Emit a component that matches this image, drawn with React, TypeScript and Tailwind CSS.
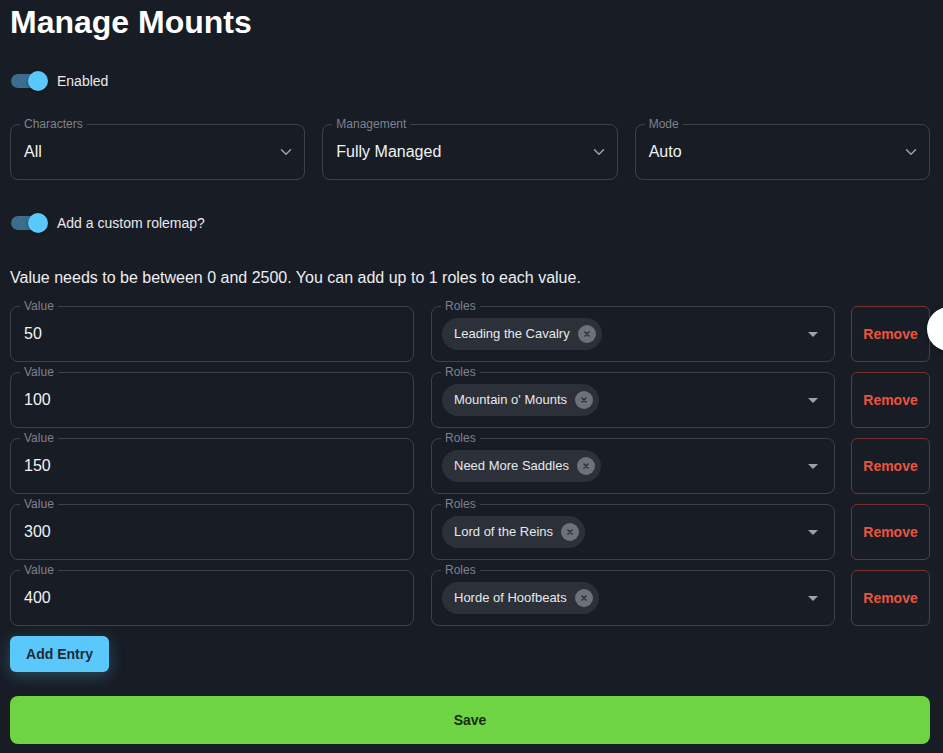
import { ChevronDown } from 'lucide-react';

type Entry = { value: string; role: string };

const entries: Entry[] = [
  { value: '50', role: 'Leading the Cavalry' },
  { value: '100', role: "Mountain o' Mounts" },
  { value: '150', role: 'Need More Saddles' },
  { value: '300', role: 'Lord of the Reins' },
  { value: '400', role: 'Horde of Hoofbeats' },
];

const Toggle = ({ label }: { label: string }) => (
  <div className="flex h-[24px] items-center">
    <div className="relative ml-[1px] h-[14px] w-[36px] rounded-full bg-[#3a6d8e]">
      <div className="absolute top-[-3px] left-[17px] h-[20px] w-[20px] rounded-full bg-[#5ac8fa] shadow-[0_1px_3px_rgba(0,0,0,0.4)]" />
    </div>
    <span className="ml-[10px] text-[14px] text-[#e8eaee]">{label}</span>
  </div>
);

const Outlined = ({ label, children, className }: { label: string; children: React.ReactNode; className?: string }) => (
  <div className={`relative flex h-[56px] items-center rounded-[8px] border border-[#3c414b] ${className ?? ''}`}>
    <span className="absolute top-[-8px] left-[9px] bg-[#181c24] px-[4px] text-[12px] leading-[14px] text-[#7d838d]">
      {label}
    </span>
    {children}
  </div>
);

const SelectField = ({ label, value }: { label: string; value: string }) => (
  <Outlined label={label} className="flex-1 pr-[9px] pl-[13px]">
    <span className="flex-1 text-[16px] text-[#f1f2f4]">{value}</span>
    <ChevronDown size={18} strokeWidth={2} className="text-[#9ba1aa]" />
  </Outlined>
);

const RoleChip = ({ role }: { role: string }) => (
  <div className="flex h-[32px] items-center rounded-full bg-[#2c3038] pr-[6px] pl-[12px]">
    <span className="text-[13px] text-[#e6e8eb]">{role}</span>
    <span className="ml-[8px] flex h-[18px] w-[18px] items-center justify-center rounded-full bg-[#6c717a]">
      <svg width="6" height="6" viewBox="0 0 6 6">
        <path d="M1 1L5 5M5 1L1 5" stroke="#2c3038" strokeWidth="1.6" strokeLinecap="round" />
      </svg>
    </span>
  </div>
);

const App = () => {
  return (
    <div
      className="relative min-h-screen w-full overflow-hidden bg-[#181c24] px-[10px] text-[#f1f2f4]"
      style={{ fontFamily: '"Liberation Sans", Arial, sans-serif' }}
    >
      <div className="w-[920px]">
        <h1 className="pt-[3px] text-[32px] leading-[38px] font-bold text-white">Manage Mounts</h1>
        <div className="mt-[28px]">
          <Toggle label="Enabled" />
        </div>
        <div className="mt-[31px] flex gap-[17px]">
          <SelectField label="Characters" value="All" />
          <SelectField label="Management" value="Fully Managed" />
          <SelectField label="Mode" value="Auto" />
        </div>
        <div className="mt-[31px]">
          <Toggle label="Add a custom rolemap?" />
        </div>
        <p className="mt-[33px] text-[16px] leading-[20px] text-[#eceef1]">
          Value needs to be between 0 and 2500. You can add up to 1 roles to each value.
        </p>
        <div className="mt-[18px] flex flex-col gap-[10px]">
          {entries.map((entry) => (
            <div key={entry.value} className="flex">
              <Outlined label="Value" className="w-[404px] shrink-0 pl-[13px]">
                <span className="text-[16px] text-[#f1f2f4]">{entry.value}</span>
              </Outlined>
              <Outlined label="Roles" className="ml-[17px] w-[404px] shrink-0 pr-[16px] pl-[10px]">
                <div className="flex-1">
                  <div className="inline-flex">
                    <RoleChip role={entry.role} />
                  </div>
                </div>
                <svg width="10" height="5" viewBox="0 0 10 5">
                  <path d="M0 0H10L5 5Z" fill="#9ba1aa" />
                </svg>
              </Outlined>
              <button className="ml-[16px] flex h-[56px] w-[79px] shrink-0 items-center justify-center rounded-[6px] border border-[#7a2f2c] text-[14px] font-bold text-[#e8553f]">
                Remove
              </button>
            </div>
          ))}
        </div>
        <button className="mt-[10px] h-[36px] w-[99px] rounded-[6px] bg-[#5ac8fa] text-[14px] font-bold text-[#1e2a38] shadow-[0_4px_16px_rgba(90,200,250,0.28)]">
          Add Entry
        </button>
        <button className="mt-[24px] mb-[9px] h-[48px] w-full rounded-[8px] bg-[#6fd444] text-[14px] font-bold text-[#1b2a17]">
          Save
        </button>
      </div>
      {/* floating helper bubble at the edge */}
      <div className="absolute top-[307px] left-[927px] h-[44px] w-[44px] rounded-full bg-white shadow-[0_2px_6px_rgba(0,0,0,0.3)]" />
    </div>
  );
};

export default App;
